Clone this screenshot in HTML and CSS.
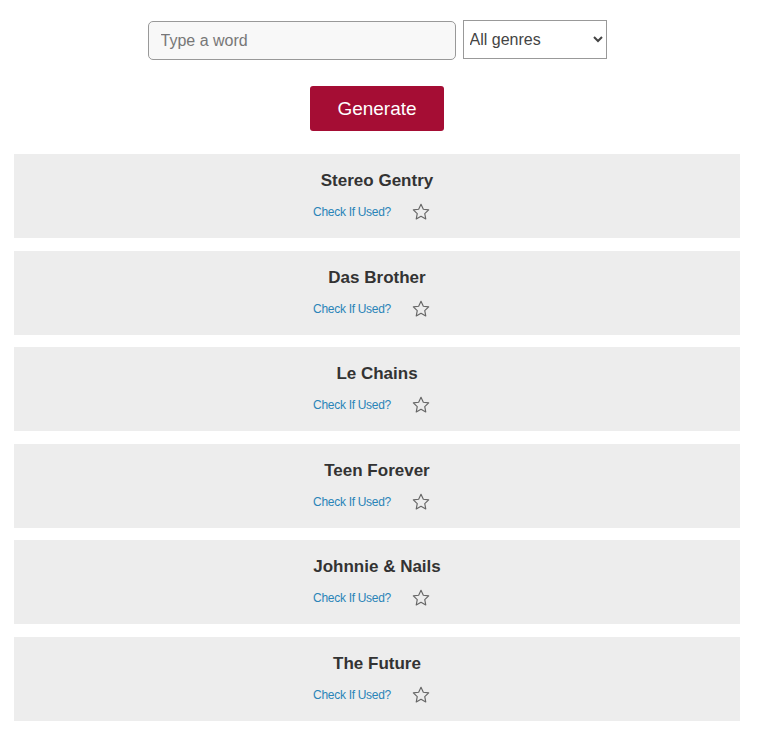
FILE: index.html
```html
<!DOCTYPE html>
<html lang="en">
<head>
    <meta charset="UTF-8">
    <meta name="viewport" content="width=device-width, initial-scale=1.0">
    <title>Band Name Generator</title>
    <link rel="stylesheet" href="styles.css">
</head>
<body>
    <!-- Formulaire -->
    <form class="search" onsubmit="return false">
        <div class="search-row">
            <input type="text" class="word" placeholder="Type a word">
            <select class="genre">
                <option>All genres</option>
                <option>Rock</option>
                <option>Pop</option>
                <option>Metal</option>
            </select>
        </div>
        <button type="submit" class="generate">Generate</button>
    </form>

    <!-- Résultats -->
    <div class="results">
        <div class="card">
            <h3>Stereo Gentry</h3>
            <div class="card-actions">
                <a href="#">Check If Used?</a>
                <svg class="star" viewBox="0 0 24 24"><path d="M12 2.8l2.8 5.9 6.4.8-4.7 4.4 1.2 6.4L12 17.2l-5.7 3.1 1.2-6.4-4.7-4.4 6.4-.8z"/></svg>
            </div>
        </div>
        <div class="card">
            <h3>Das Brother</h3>
            <div class="card-actions">
                <a href="#">Check If Used?</a>
                <svg class="star" viewBox="0 0 24 24"><path d="M12 2.8l2.8 5.9 6.4.8-4.7 4.4 1.2 6.4L12 17.2l-5.7 3.1 1.2-6.4-4.7-4.4 6.4-.8z"/></svg>
            </div>
        </div>
        <div class="card">
            <h3>Le Chains</h3>
            <div class="card-actions">
                <a href="#">Check If Used?</a>
                <svg class="star" viewBox="0 0 24 24"><path d="M12 2.8l2.8 5.9 6.4.8-4.7 4.4 1.2 6.4L12 17.2l-5.7 3.1 1.2-6.4-4.7-4.4 6.4-.8z"/></svg>
            </div>
        </div>
        <div class="card">
            <h3>Teen Forever</h3>
            <div class="card-actions">
                <a href="#">Check If Used?</a>
                <svg class="star" viewBox="0 0 24 24"><path d="M12 2.8l2.8 5.9 6.4.8-4.7 4.4 1.2 6.4L12 17.2l-5.7 3.1 1.2-6.4-4.7-4.4 6.4-.8z"/></svg>
            </div>
        </div>
        <div class="card">
            <h3>Johnnie &amp; Nails</h3>
            <div class="card-actions">
                <a href="#">Check If Used?</a>
                <svg class="star" viewBox="0 0 24 24"><path d="M12 2.8l2.8 5.9 6.4.8-4.7 4.4 1.2 6.4L12 17.2l-5.7 3.1 1.2-6.4-4.7-4.4 6.4-.8z"/></svg>
            </div>
        </div>
        <div class="card">
            <h3>The Future</h3>
            <div class="card-actions">
                <a href="#">Check If Used?</a>
                <svg class="star" viewBox="0 0 24 24"><path d="M12 2.8l2.8 5.9 6.4.8-4.7 4.4 1.2 6.4L12 17.2l-5.7 3.1 1.2-6.4-4.7-4.4 6.4-.8z"/></svg>
            </div>
        </div>
    </div>
</body>
</html>
```

FILE: styles.css
```css
:root {
    --rouge: #a50d34;
    --gris: #ededed;
    --texte: #333333;
    --lien: #2a84b8;
}

body {
    font-family: "Liberation Sans", Arial, sans-serif;
    margin: 0;
    background: #ffffff;
    color: var(--texte);
}

/* Formulaire */
.search {
    display: flex;
    flex-direction: column;
    align-items: center;
    padding: 20px 4px 0 0;
}

.search-row {
    display: flex;
    gap: 7px;
}

.word {
    box-sizing: border-box;
    width: 308px;
    height: 39px;
    padding: 0 12px;
    margin-top: 1px;
    border: 1px solid #999;
    border-radius: 5px;
    background: #f8f8f8;
    font-family: inherit;
    font-size: 16px;
    color: var(--texte);
}

.word::placeholder {
    color: #777;
}

.genre {
    box-sizing: border-box;
    width: 144px;
    height: 39px;
    padding: 0 2px;
    border: 1px solid #999;
    border-radius: 0;
    background: #fff;
    font-family: inherit;
    font-size: 16px;
    color: #444;
}

.generate {
    margin-top: 26px;
    width: 134px;
    height: 45px;
    border: none;
    border-radius: 3px;
    background: var(--rouge);
    color: #fff;
    font-family: inherit;
    font-size: 19px;
    cursor: pointer;
}

/* Résultats */
.results {
    display: flex;
    flex-direction: column;
    gap: 12.6px;
    margin: 23px 18px 0 14px;
}

.card {
    height: 84px;
    box-sizing: border-box;
    padding-top: 17px;
    background: var(--gris);
    text-align: center;
}

.card h3 {
    margin: 0;
    font-size: 17px;
    font-weight: bold;
    line-height: 20px;
}

.card-actions {
    display: flex;
    justify-content: center;
    align-items: center;
    gap: 20px;
    margin-top: 11px;
    padding-right: 10px;
}

.card-actions a {
    color: var(--lien);
    font-size: 12px;
    letter-spacing: -0.3px;
    text-decoration: none;
}

.star {
    width: 20px;
    height: 20px;
    fill: none;
    stroke: #666;
    stroke-width: 1.4;
    stroke-linejoin: round;
}
```
